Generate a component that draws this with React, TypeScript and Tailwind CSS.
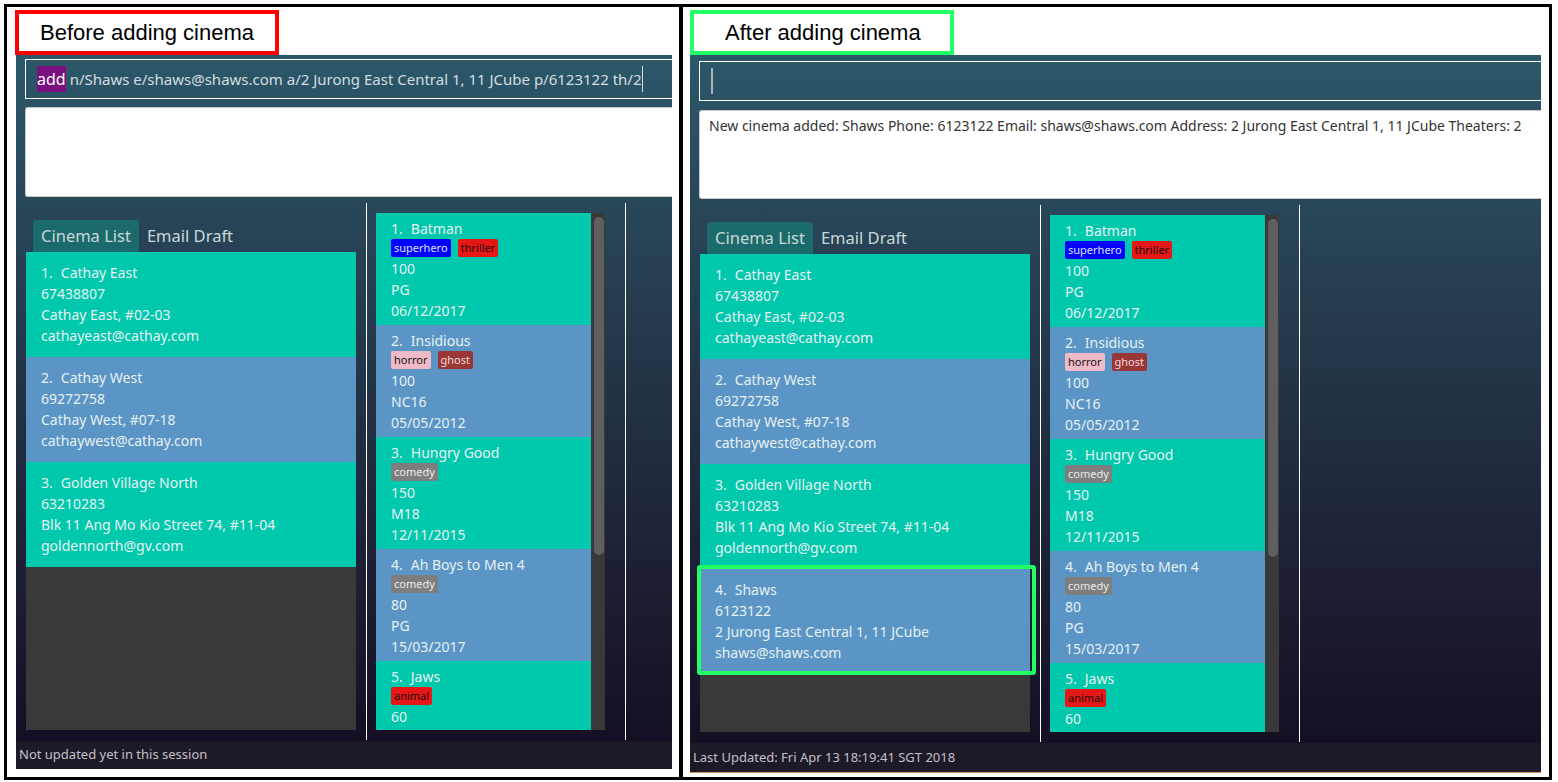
import React from 'react'

type Movie = { title: string; tags: string[]; lines: string[] }
type Cinema = { name: string; phone: string; address: string; email: string }

const tagStyles: Record<string, string> = {
  superhero: 'bg-[#0000ff] text-[#dfe3ff]',
  thriller: 'bg-[#e61717] text-[#1c1010]',
  horror: 'bg-[#f0b9c8] text-[#151515]',
  ghost: 'bg-[#9b3636] text-[#efd9d9]',
  comedy: 'bg-[#7e7e7e] text-[#ececec]',
  animal: 'bg-[#e61717] text-[#1c1010]',
}

const movies: Movie[] = [
  { title: 'Batman', tags: ['superhero', 'thriller'], lines: ['100', 'PG', '06/12/2017'] },
  { title: 'Insidious', tags: ['horror', 'ghost'], lines: ['100', 'NC16', '05/05/2012'] },
  { title: 'Hungry Good', tags: ['comedy'], lines: ['150', 'M18', '12/11/2015'] },
  { title: 'Ah Boys to Men 4', tags: ['comedy'], lines: ['80', 'PG', '15/03/2017'] },
  { title: 'Jaws', tags: ['animal'], lines: ['60'] },
]

const cinemas: Cinema[] = [
  { name: 'Cathay East', phone: '67438807', address: 'Cathay East, #02-03', email: 'cathayeast@cathay.com' },
  { name: 'Cathay West', phone: '69272758', address: 'Cathay West, #07-18', email: 'cathaywest@cathay.com' },
  { name: 'Golden Village North', phone: '63210283', address: 'Blk 11 Ang Mo Kio Street 74, #11-04', email: 'goldennorth@gv.com' },
]

const shaws: Cinema = { name: 'Shaws', phone: '6123122', address: '2 Jurong East Central 1, 11 JCube', email: 'shaws@shaws.com' }

function CinemaCard({ c, i, highlight }: { c: Cinema; i: number; highlight?: boolean }) {
  return (
    <div className={`relative h-[105px] shrink-0 pl-[15px] pt-[10px] text-[14px] leading-[21px] text-[#e6f1f1] ${i % 2 === 0 ? 'bg-[#00c8ad]' : 'bg-[#5b95c6]'}`}>
      <div>{i + 1}.<span className="ml-[8px]">{c.name}</span></div>
      <div>{c.phone}</div>
      <div>{c.address}</div>
      <div>{c.email}</div>
      {highlight && (
        <div className="absolute left-[-3px] top-[-4px] w-[339px] h-[110px] border-[4px] border-[#22ff66] rounded-[3px]" />
      )}
    </div>
  )
}

function MovieCard({ m, i }: { m: Movie; i: number }) {
  return (
    <div className={`h-[112px] shrink-0 pl-[15px] pt-[5px] text-[14px] leading-[21px] text-[#e6f1f1] ${i % 2 === 0 ? 'bg-[#00c8ad]' : 'bg-[#5b95c6]'}`}>
      <div>{i + 1}.<span className="ml-[8px]">{m.title}</span></div>
      <div className="flex gap-[7px] h-[19px]">
        {m.tags.map(t => (
          <span key={t} className={`h-[18px] px-[3px] rounded-[2px] text-[11px] leading-[18px] ${tagStyles[t]}`}>{t}</span>
        ))}
      </div>
      {m.lines.map((l, k) => <div key={k}>{l}</div>)}
    </div>
  )
}

function AppWindow({ after }: { after: boolean }) {
  const list = after ? [...cinemas, shaws] : cinemas
  return (
    <div className={`flex flex-col overflow-hidden bg-linear-to-b from-[#2b5869] to-[#140c21] font-['Noto_Sans',sans-serif] ${after ? 'w-[851px] h-[718px]' : 'w-[656px] h-[714px]'}`}>
      {/* command box */}
      <div className={`pl-[9px] ${after ? 'pt-[6px]' : 'pt-[4px]'}`}>
        <div className="h-[40px] border border-r-0 border-white flex items-center pl-[11px] text-[15px] text-[#d3dde1] whitespace-nowrap overflow-hidden">
          {after ? (
            <span className="w-[2px] h-[26px] bg-[#a9b4b8]" />
          ) : (
            <>
              <span className="bg-[#7a0f80] text-white leading-[26px] text-[16px]">add</span>
              <span className="ml-[4px]">n/Shaws e/shaws@shaws.com a/2 Jurong East Central 1, 11 JCube p/6123122 th/2</span>
              <span className="w-[1px] h-[26px] bg-[#d3dde1]" />
            </>
          )}
        </div>
      </div>

      {/* result box */}
      <div className={`pl-[9px] ${after ? 'mt-[9px] h-[89px]' : 'mt-[8px] h-[90px]'}`}>
        <div className="h-full bg-white border border-r-0 border-[#c8c8c8] rounded-l-[3px] px-[9px] pt-[6px] text-[14px] leading-[18px] text-[#333333] whitespace-nowrap">
          {after && 'New cinema added: Shaws Phone: 6123122 Email: shaws@shaws.com Address: 2 Jurong East Central 1, 11 JCube Theaters: 2'}
        </div>
      </div>

      {/* lists */}
      <div className="flex flex-1 min-h-0 pt-[6px] pb-[1px]">
        <div className="w-[351px] shrink-0 border-r border-white flex flex-col px-[10px] pt-[17px] pb-[10px]">
          <div className="flex h-[32px] ml-[7px] text-[16.5px] text-[#c9d8da]">
            <div className="flex items-center px-[8px] bg-[#1b6a6c] rounded-t-[3px]">Cinema List</div>
            <div className="flex items-center px-[8px]">Email Draft</div>
          </div>
          <div className="flex-1 flex flex-col bg-[#393939]">
            {list.map((c, i) => <CinemaCard key={c.name} c={c} i={i} highlight={after && c.name === 'Shaws'} />)}
          </div>
        </div>
        <div className="w-[259px] shrink-0 border-r border-white flex pl-[9px] pr-[20px] pt-[10px] pb-[10px]">
          <div className="w-[215px] flex flex-col overflow-hidden">
            {movies.map((m, i) => <MovieCard key={m.title} m={m} i={i} />)}
          </div>
          <div className="w-[14px] bg-[#393939] pt-[4px] pl-[3px]">
            <div className="w-[10px] h-[338px] rounded-[5px] bg-[#5f5f5f]" />
          </div>
        </div>
      </div>

      {/* status bar */}
      <div className={`flex items-center pl-[3px] bg-[#1e1926] text-[13px] text-[#c3c0c8] ${after ? 'h-[30px] border-b border-[#d4915c]' : 'h-[28px]'}`}>
        {after ? 'Last Updated: Fri Apr 13 18:19:41 SGT 2018' : 'Not updated yet in this session'}
      </div>
    </div>
  )
}

export default function App() {
  return (
    <div className="w-[1558px] h-[782px] bg-white overflow-hidden">
      <div className="flex pt-[4px] pl-[4px]">
        <div className="w-[678px] h-[776px] border-[3px] border-black pl-[8px] pt-[3px]">
          <div className="w-[264px] h-[45px] border-[4px] border-[#ff0000] flex items-center pl-[21px] font-['Liberation_Sans',Arial,sans-serif] text-[22px] text-black">
            Before adding cinema
          </div>
          <div className="ml-[1px]">
            <AppWindow after={false} />
          </div>
        </div>
        <div className="-ml-[2px] w-[872px] h-[776px] border-[3px] border-black pl-[7px] pt-[3px]">
          <div className="w-[264px] h-[45px] border-[4px] border-[#22ff66] flex items-center pl-[31px] font-['Liberation_Sans',Arial,sans-serif] text-[22px] text-black">
            After adding cinema
          </div>
          <AppWindow after={true} />
        </div>
      </div>
    </div>
  )
}
